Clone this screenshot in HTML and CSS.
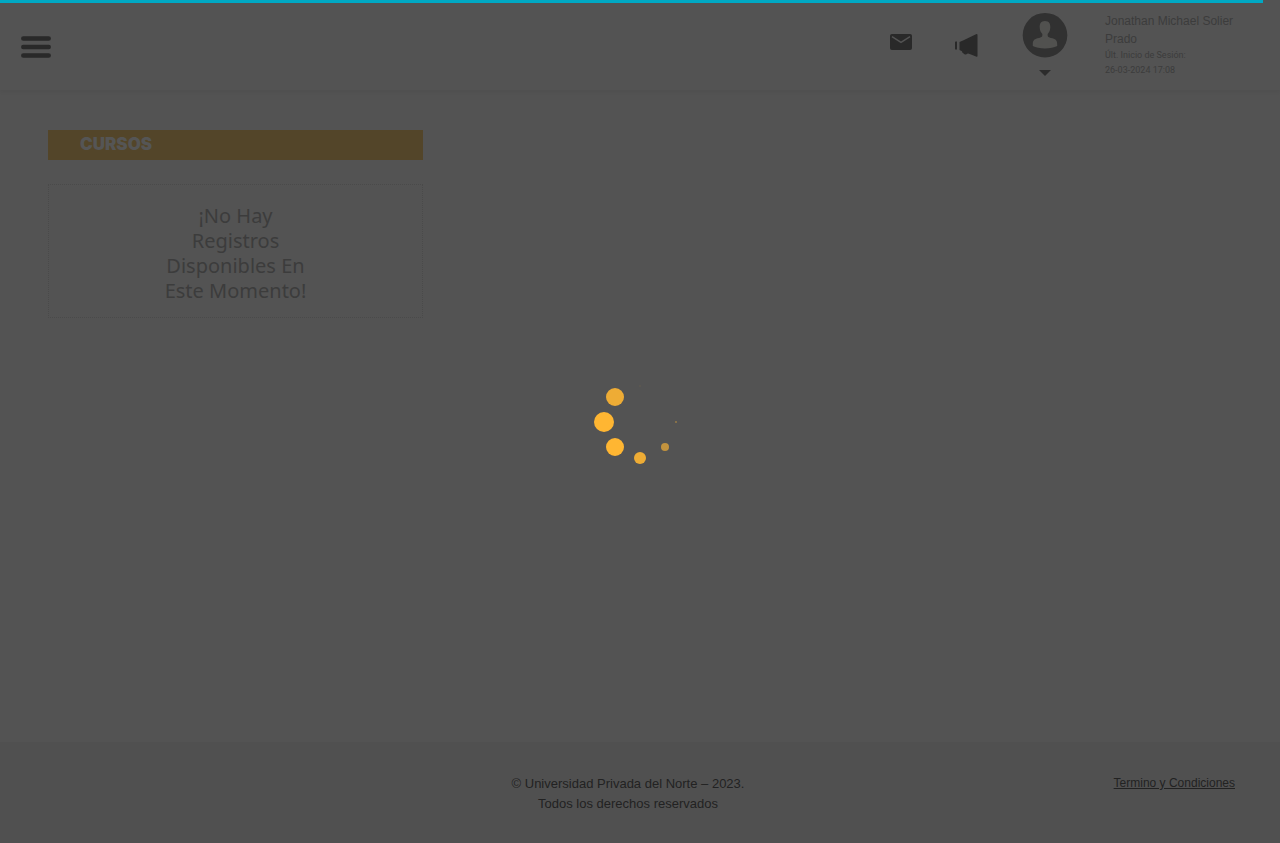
FILE: index.html
```html
<!DOCTYPE html>
<html lang="es">
<head>
<meta charset="utf-8">
<title>Cursos</title>
<meta name="viewport" content="width=device-width, initial-scale=1">
<link rel="stylesheet" href="styles.css">
</head>
<body>
<header class="header">
  <button class="menu" type="button" aria-label="Menú">
    <svg width="30" height="22" viewBox="0 0 30 22" stroke="#292929" stroke-width="4.500" stroke-linecap="round"><path d="M2.300 2.500h25.400M2.300 11h25.400M2.300 19.500h25.400"/></svg>
  </button>
  <nav class="tools">
    <button class="tool" type="button" aria-label="Mensajes">
      <svg width="22" height="16" viewBox="0 0 22 16"><rect width="22" height="16" rx="2" fill="#292929"/><path d="M2 2.600 11 8.300l9-5.700" fill="none" stroke="#535353" stroke-width="1.500"/></svg>
    </button>
    <button class="tool tool-news" type="button" aria-label="Anuncios">
      <svg width="23" height="24" viewBox="0 0 23 24" fill="#292929"><path d="M0 8Q0 7.500.7 7.500H2v8H.7Q0 15.500 0 15zM4.500 8 8 6.500 21 .3Q22.500-.3 22.500 1v21Q22.500 23.200 21 22.500l-7-2.800q-1-.4-1.800 0-.9 1.200-2.700.5L7.300 18.500l-.3-1.300-2.500-1.100z"/></svg>
    </button>
    <button class="account" type="button" aria-label="Cuenta">
      <svg width="46" height="46" viewBox="0 0 46 46"><circle cx="23" cy="23.200" r="22.300" fill="#313131"/><path d="M23 9c4 0 5.500 2.800 5.300 6.500-.2 3-1 4.500-2.600 6.600-.3 2.500.3 3.200 3.300 3.900 4.300.8 6.200 2 6.200 6.300v1.800c-3 1.700-7.200 2.400-12.200 2.400s-9.200-.7-12.200-2.400v-1.800c0-4.300 1.900-5.500 6.200-6.300 3-.7 3.600-1.400 3.300-3.900-1.600-2.100-2.400-3.600-2.600-6.600-.2-3.700 1.300-6.500 5.300-6.500z" fill="#51514f"/></svg>
      <svg width="12" height="6" viewBox="0 0 12 6"><path d="M0 0h12L6 6z" fill="#2c2c2c"/></svg>
    </button>
    <div class="user">
      <p class="user-name">Jonathan Michael Solier Prado</p>
      <p class="session">Últ. Inicio de Sesión:<br>26-03-2024 17:08</p>
    </div>
  </nav>
</header>
<main class="main">
  <section class="courses">
    <h1 class="title">CURSOS</h1>
    <div class="empty"><p class="empty-text">¡No Hay Registros Disponibles En Este Momento!</p></div>
  </section>
</main>
<footer class="footer">
  <p class="copyright">© Universidad Privada del Norte – 2023.<br>Todos los derechos reservados</p>
  <a class="terms" href="#">Termino y Condiciones</a>
</footer>
<div class="progress"></div>
<div class="loader" role="status" aria-label="Cargando">
  <svg width="92" height="92" viewBox="0 0 92 92" fill="#ffb632">
    <circle cx="21" cy="21" r="9" opacity=".9"/>
    <circle cx="10" cy="46" r="10"/>
    <circle cx="21" cy="71" r="9"/>
    <circle cx="46" cy="82" r="6" opacity=".9"/>
    <circle cx="71" cy="71" r="4" opacity=".65"/>
    <circle cx="82" cy="46" r="1" opacity=".4"/>
    <circle cx="46" cy="10" r="1" opacity=".06"/>
  </svg>
</div>
</body>
</html>
```
FILE: styles.css
```css
* { box-sizing: border-box; }
body {
  margin: 0;
  min-height: 100vh;
  display: flex;
  flex-direction: column;
  background: #535353;
  color: #3c3c3c;
  font-family: "Liberation Sans", Arial, sans-serif;
}
p, h1 { margin: 0; }
button { border: 0; padding: 0; background: none; cursor: pointer; }
svg { display: block; }
.header {
  min-height: 90px;
  display: flex;
  align-items: center;
  justify-content: space-between;
  padding: 0 40px 0 21px;
  box-shadow: 0 2px 4px rgba(0, 0, 0, 0.05);
}
.menu { padding-top: 4px; }
.tools { display: flex; align-items: flex-start; }
.tool { padding-top: 22px; margin-right: 43px; }
.tool-news { margin-right: 44px; }
.account { display: grid; justify-items: center; gap: 12px; margin-right: 37px; }
.user { width: 135px; }
.user-name { font-size: 12px; line-height: 18px; }
.session { font-family: Roboto, sans-serif; font-size: 9px; line-height: 15px; }
.main { flex: 1; padding: 40px 48px; }
.courses { width: 30%; min-width: 375px; }
.title {
  height: 30px;
  padding-left: 32px;
  background: #534529;
  color: #555;
  font-family: Inter, sans-serif;
  font-size: 17px;
  font-weight: 900;
  line-height: 28px;
}
.empty {
  margin-top: 24px;
  padding: 18px 16px 14px;
  border: 1px dotted #4a4a4a;
}
.empty-text {
  width: 160px;
  margin: 0 auto;
  font-family: "Noto Sans", sans-serif;
  font-size: 20px;
  line-height: 25px;
  text-align: center;
}
.footer {
  min-height: 101px;
  display: grid;
  grid-template-columns: 1fr auto 1fr;
  align-items: start;
  padding: 32px 45px 28px 21px;
  background: #505050;
  color: #222;
}
.copyright { grid-column: 2; font-size: 13px; line-height: 20px; text-align: center; }
.terms { justify-self: end; color: inherit; font-size: 12px; line-height: 18px; }
.progress { position: fixed; top: 0; left: 0; right: 17px; height: 3px; background: #00a9c4; }
.loader { position: fixed; inset: 0; display: grid; place-items: center; }
```
